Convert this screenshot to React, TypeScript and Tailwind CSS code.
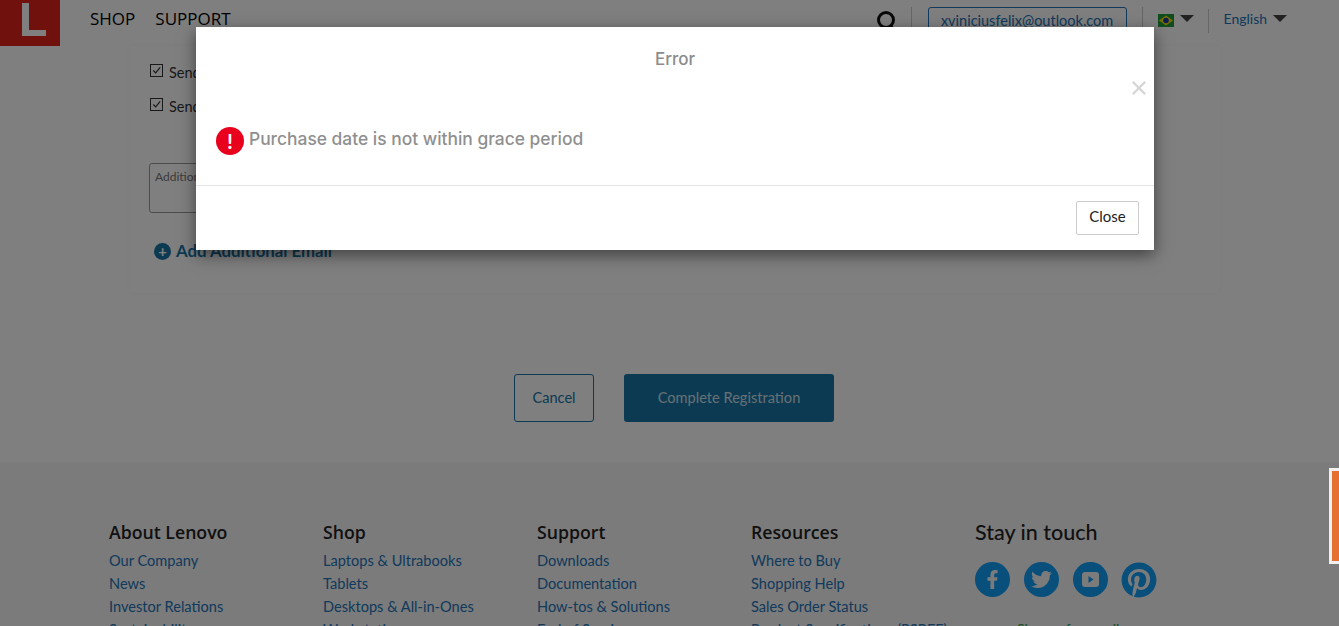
import React from "react";
import { FaFacebookF, FaTwitter, FaPinterest } from "react-icons/fa";
import { FiX } from "react-icons/fi";

const columns = [
  { title: "About Lenovo", x: "w-[214px]", links: ["Our Company", "News", "Investor Relations", "Sustainability"] },
  { title: "Shop", x: "w-[214px]", links: ["Laptops & Ultrabooks", "Tablets", "Desktops & All-in-Ones", "Workstations"] },
  { title: "Support", x: "w-[214px]", links: ["Downloads", "Documentation", "How-tos & Solutions", "End of Service"] },
  { title: "Resources", x: "w-[224px]", links: ["Where to Buy", "Shopping Help", "Sales Order Status", "Product Specifications (PSREF)"] },
];

function Caret() {
  return <span className="h-0 w-0 border-x-[7px] border-t-[7px] border-x-transparent border-t-[#444]" />;
}

function Checkbox() {
  return (
    <span className="flex h-[13px] w-[13px] items-center justify-center border border-[#333]">
      <svg viewBox="0 0 12 12" className="h-[11px] w-[11px]" fill="none" stroke="#333" strokeWidth="1.3">
        <path d="M2.5 6l2.6 2.6L10 2.6" />
      </svg>
    </span>
  );
}

function Social({ children }: { children: React.ReactNode }) {
  return (
    <span className="flex h-[35px] w-[35px] items-center justify-center rounded-full bg-[#109ef8] text-[#f6f6f6]">
      {children}
    </span>
  );
}

export default function App() {
  return (
    <div className="relative h-[626px] w-full overflow-hidden bg-white font-['Lato',sans-serif]">
      {/* page under the dialog */}
      <header className="flex h-[46px] items-start">
        <div className="h-[46px] w-[60px] bg-[#e2231a] pl-[22px] pt-[3px]">
          <span className="block h-[33px] w-[24px] border-b-[6px] border-l-[7px] border-white" />
        </div>
        <nav className="ml-[30px] flex gap-[20px] pt-[8px] font-['Open_Sans',sans-serif] text-[17px] leading-[22px] text-black">
          <span>SHOP</span>
          <span>SUPPORT</span>
        </nav>
        <div className="ml-[645px] flex items-start pt-[7px]">
          <svg viewBox="0 0 20 24" className="mt-[3px] h-[24px] w-[20px]" fill="none" stroke="#111" strokeWidth="3">
            <circle cx="10" cy="10" r="7.5" />
            <path d="M14 15l4 5" />
          </svg>
          <span className="ml-[15px] h-[26px] w-px bg-[#ccc]" />
          <span className="ml-[16px] flex h-[30px] w-[199px] items-center justify-center rounded-[3px] border border-[#2374b8] pb-[3px] text-[14.5px] text-[#2374b8]">
            xviniciusfelix@outlook.com
          </span>
          <span className="ml-[15px] h-[26px] w-px bg-[#ccc]" />
          <svg viewBox="0 0 16 13" className="ml-[15px] mt-[7px] h-[13px] w-[16px]">
            <rect width="16" height="13" fill="#1f9a3a" />
            <path d="M8 1.5L15 6.5 8 11.500 1 6.500z" fill="#f4d90a" />
            <circle cx="8" cy="6.500" r="2.800" fill="#1f3f9a" />
          </svg>
          <span className="ml-[6px] mt-[8px] flex"><Caret /></span>
          <span className="ml-[14px] mt-[2px] h-[24px] w-px bg-[#ccc]" />
          <span className="ml-[15px] mt-[3px] text-[14px] leading-[18px] text-[#2374b8]">English</span>
          <span className="ml-[6px] mt-[8px] flex"><Caret /></span>
        </div>
      </header>

      <main>
        <section className="ml-[129px] h-[247px] w-[1091px] rounded-[3px] bg-white pl-[20px] pt-[18px] shadow-[0_0_5px_rgba(0,0,0,0.05)]">
          <div className="ml-px flex flex-col gap-[21px] text-[14.5px] leading-[13px] text-[#333]">
            <label className="flex h-[13px] items-start gap-[6px]"><Checkbox /><span className="mt-[2px]">Send email updates</span></label>
            <label className="flex h-[13px] items-start gap-[6px]"><Checkbox /><span className="mt-[2px]">Send text updates</span></label>
          </div>
          <div className="mt-[52px] h-[50px] w-[500px] rounded-[3px] border border-[#999] px-[5px] py-[5px] text-[12px] leading-[16px] text-[#777]">
            Additional Email
          </div>
          <div className="ml-[5px] mt-[29px] flex items-center gap-[5px] text-[16.8px] font-bold leading-[18px] text-[#1874a4]">
            <span className="flex h-[17px] w-[17px] items-center justify-center rounded-full bg-[#1874a4] text-[15px] leading-[15px] text-white">+</span>
            Add Additional Email
          </div>
        </section>

        <div className="ml-[514px] mt-[81px] flex gap-[30px] text-[14.600px]">
          <button className="h-[48px] w-[80px] rounded-[3px] border border-[#1874a4] pb-px text-[#1874a4]">Cancel</button>
          <button className="h-[48px] w-[210px] rounded-[3px] bg-[#1874a4] pb-px text-[#cfe0ea]">Complete Registration</button>
        </div>
      </main>

      <footer className="mt-[40px] flex bg-[#f6f6f6] pl-[109px] pt-[58px] pb-[20px]">
        {columns.map((c) => (
          <div key={c.title} className={c.x}>
            <h3 className="font-['Open_Sans',sans-serif] text-[17.700px] font-semibold leading-[24px] text-[#222]">{c.title}</h3>
            <ul className="mt-[7px] flex flex-col gap-[3px] text-[14.6px] leading-[20px] text-[#2374b8]">
              {c.links.map((l) => (
                <li key={l}>{l}</li>
              ))}
            </ul>
          </div>
        ))}
        <div>
          <h3 className="-mt-px text-[21.5px] font-medium leading-[26px] text-[#222]">Stay in touch</h3>
          <div className="mt-[17px] flex gap-[14px]">
            <Social><FaFacebookF size={19} /></Social>
            <Social><FaTwitter size={21} /></Social>
            <Social>
              <svg viewBox="0 0 17 15" className="h-[15px] w-[17px]">
                <rect width="17" height="15" rx="3" fill="#f6f6f6" />
                <path d="M6.500 4l5 3.500-5 3.500z" fill="#109ef8" />
              </svg>
            </Social>
            <FaPinterest size={36} className="-ml-px text-[#109ef8]" />
          </div>
          <p className="mt-[22px] pl-[42px] text-[14px] leading-[18px] text-[#1f9a3a]">Sign up for email</p>
        </div>
      </footer>

      {/* dialog */}
      <div className="absolute inset-0 bg-black/50">
        <div className="ml-[196px] mt-[27px] w-[958px] bg-white shadow-[0_5px_15px_rgba(0,0,0,0.5)]">
          <div className="relative h-[158px]">
            <h4 className="pt-[21px] text-center font-['Inter',sans-serif] text-[17px] font-medium leading-[22px] text-[#8c8c8c]">Error</h4>
            <FiX size={22} strokeWidth={2.6} className="absolute right-[4px] top-[50px] text-[#d5d5d5]" />
            <div className="ml-[20px] mt-[57px] flex items-start gap-[5px]">
              <span className="flex h-[28px] w-[28px] items-center justify-center rounded-full bg-[#e8001c] text-[21px] font-bold leading-[28px] text-white">!</span>
              <span className="font-['Inter',sans-serif] text-[17.4px] font-medium leading-[24px] text-[#8f8f8f]">Purchase date is not within grace period</span>
            </div>
          </div>
          <div className="flex h-[65px] justify-end border-t border-[#e5e5e5] pr-[15px] pt-[15px]">
            <button className="h-[34px] w-[63px] rounded-[2px] border border-[#ccc] bg-white pb-[3px] text-[15px] text-[#222]">Close</button>
          </div>
        </div>
      </div>

      {/* feedback tab stays above the backdrop */}
      <div className="absolute right-0 top-[468px] h-[96px] w-[10px] border-[3px] border-r-0 border-[#f0f0f0] bg-[#e5702f]" />
    </div>
  );
}
